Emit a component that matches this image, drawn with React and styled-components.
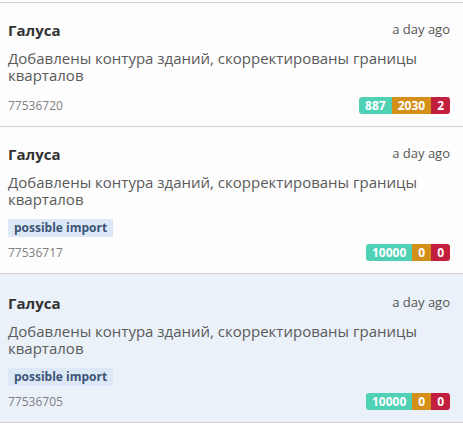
import React from "react";
import styled, { createGlobalStyle } from "styled-components";

const Global = createGlobalStyle`
  html, body { margin: 0; padding: 0; background: #ffffff; }
  body { font-family: "Open Sans", "Noto Sans", sans-serif; }
`;

const List = styled.div`
  padding-top: 2px;
  width: 463px;
`;

const Card = styled.div`
  border-top: 1px solid #cfcfcf;
  background: ${(p) => (p.$active ? "#eaf1f9" : "#fdfdfd")};
  padding: ${(p) => (p.$active ? "19px" : "17px")} 13px 12px 8px;
  &:last-child { border-bottom: 1px solid #cfcfcf; }
`;

const Header = styled.div`
  display: flex;
  justify-content: space-between;
  align-items: flex-start;
`;

const User = styled.div`
  font-size: 15px;
  font-weight: 700;
  line-height: 20px;
  color: #333;
`;

const Time = styled.div`
  font-size: 13px;
  line-height: 18px;
  color: #555;
`;

const Description = styled.div`
  margin-top: 10px;
  font-size: 15px;
  line-height: 17px;
  color: #5a5a5a;
`;

const Tag = styled.div`
  display: inline-block;
  margin-top: 11px;
  background: #dde8f6;
  color: #3b5477;
  font-size: 12px;
  font-weight: 700;
  line-height: 18px;
  padding: 0 6px;
`;

const Footer = styled.div`
  display: flex;
  justify-content: space-between;
  align-items: center;
  margin-top: ${(p) => (p.$afterTag ? "7px" : "13px")};
`;

const Id = styled.div`
  font-size: 12px;
  line-height: 17px;
  color: #808080;
`;

const Counts = styled.div`
  display: flex;
  border-radius: 3px;
  overflow: hidden;
`;

const Count = styled.span`
  background: ${(p) => p.$color};
  color: #fff;
  font-size: 12px;
  font-weight: 700;
  line-height: 17px;
  padding: 0 6px;
`;

const items = [
  { id: "77536720", counts: [887, 2030, 2], tag: false, active: false },
  { id: "77536717", counts: [10000, 0, 0], tag: true, active: false },
  { id: "77536705", counts: [10000, 0, 0], tag: true, active: true },
];

const colors = ["#4fd1b6", "#d48f19", "#c21e3e"];

export default function App() {
  return (
    <>
      <Global />
      <List>
        {items.map((it) => (
          <Card key={it.id} $active={it.active}>
            <Header>
              <User>Галуса</User>
              <Time>a day ago</Time>
            </Header>
            <Description>
              Добавлены контура зданий, скорректированы границы кварталов
            </Description>
            {it.tag && <Tag>possible import</Tag>}
            <Footer $afterTag={it.tag}>
              <Id>{it.id}</Id>
              <Counts>
                {it.counts.map((c, i) => (
                  <Count key={i} $color={colors[i]}>
                    {c}
                  </Count>
                ))}
              </Counts>
            </Footer>
          </Card>
        ))}
      </List>
    </>
  );
}
